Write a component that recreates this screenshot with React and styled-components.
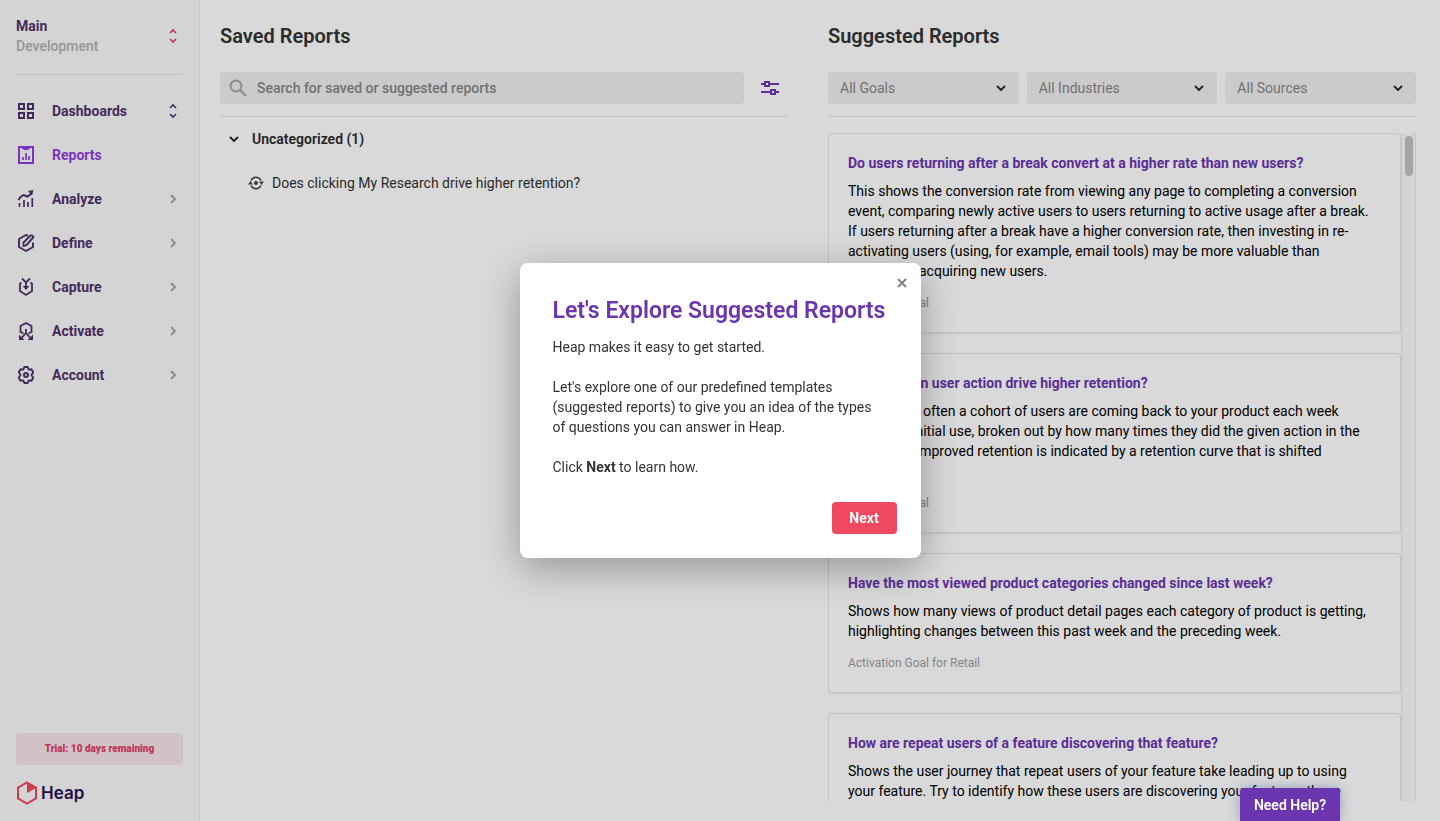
import React from 'react';
import styled, { createGlobalStyle } from 'styled-components';

const GlobalStyle = createGlobalStyle`
  *, *::before, *::after { box-sizing: border-box; }
  body { margin: 0; background: #ffffff; }
  body, button, input, select {
    font-family: Roboto, "Liberation Sans", sans-serif;
    font-size: 14px;
    line-height: 20px;
  }
  button { border: 0; padding: 0; background: none; cursor: pointer; text-align: left; }
  h1, h2, h3, p, ul { margin: 0; padding: 0; }
  ul { list-style: none; }
  a { text-decoration: none; color: inherit; }
  svg { display: block; flex: none; }
`;

const Page = styled.div`
  display: flex;
  height: 100vh;
  overflow: hidden;
  color: #333333;
`;

const Sidebar = styled.aside`
  display: flex;
  flex-direction: column;
  width: 200px;
  flex: none;
  padding: 16px;
  background: #fafafa;
  border-right: 1px solid #ebebeb;
  color: #50326a;
`;

const Environment = styled.button`
  display: flex;
  align-items: center;
  justify-content: space-between;
  padding: 0 4px 18px 0;
  border-bottom: 1px solid #e8e8e8;
  color: #50326a;
  font-weight: 700;
`;

const EnvironmentKind = styled.span`
  display: block;
  color: #b0b0b0;
  font-weight: 500;
`;

const Nav = styled.nav`
  margin-top: 14px;
  flex: 1;
`;

const NavLink = styled.a`
  display: flex;
  align-items: center;
  height: 44px;
  padding-right: 4px;
  font-weight: 700;
  color: ${(p) => (p.$active ? '#903ee0' : '#50326a')};
`;

const NavLabel = styled.span`
  flex: 1;
  margin-left: 16px;
`;

const Trial = styled.a`
  display: block;
  padding: 6px 0;
  border-radius: 4px;
  background: #f6e5e8;
  color: #e0406a;
  font-size: 10px;
  font-weight: 900;
  text-align: center;
`;

const Logo = styled.a`
  display: flex;
  align-items: center;
  gap: 3px;
  margin-top: 16px;
  color: #2b1150;
  font-family: Inter, sans-serif;
  font-size: 17px;
  font-weight: 600;
  line-height: 24px;
`;

const Main = styled.main`
  flex: 1;
  display: grid;
  grid-template-columns: repeat(2, minmax(0, 1fr));
  min-width: 0;
`;

const Column = styled.section`
  display: flex;
  flex-direction: column;
  min-height: 0;
  padding: ${(p) => p.$padding};
`;

const Heading = styled.h1`
  font-size: 20px;
  line-height: 24px;
  font-weight: 600;
`;

const Toolbar = styled.div`
  display: flex;
  gap: 8px;
  margin-top: 24px;
  padding-bottom: 12px;
  border-bottom: 1px solid #e8e8e8;
`;

const SearchBox = styled.label`
  flex: 1;
  display: flex;
  align-items: center;
  gap: 10px;
  height: 32px;
  padding: 0 9px;
  border-radius: 4px;
  background: #efefef;
`;

const SearchInput = styled.input`
  flex: 1;
  min-width: 0;
  border: 0;
  padding: 0;
  outline: 0;
  background: none;
  font-weight: 500;
  &::placeholder { color: #858585; opacity: 1; }
`;

const IconButton = styled.button`
  display: grid;
  place-items: center;
  width: 36px;
  height: 32px;
`;

const GroupToggle = styled.button`
  display: flex;
  align-items: center;
  gap: 10px;
  height: 40px;
  margin-top: 2px;
  padding-left: 6px;
  color: #2b2b2b;
  font-weight: 600;
`;

const SavedReport = styled.a`
  display: flex;
  align-items: center;
  gap: 8px;
  height: 40px;
  margin-top: 4px;
  padding-left: 28px;
`;

const SelectBox = styled.span`
  flex: 1;
  min-width: 0;
  display: grid;
  align-items: center;
  & > * { grid-area: 1 / 1; }
  & > svg { justify-self: end; margin-right: 10px; pointer-events: none; }
`;

const Select = styled.select`
  appearance: none;
  width: 100%;
  height: 32px;
  padding: 0 32px 0 12px;
  border: 0;
  border-radius: 4px;
  background: #efefef;
  color: #858585;
`;

const Suggestions = styled.div`
  display: flex;
  flex: 1;
  min-height: 0;
  margin-top: 16px;
`;

const CardList = styled.ul`
  flex: 1;
  min-width: 0;
  overflow: hidden;
`;

const Card = styled.li`
  margin-bottom: 20px;
  padding: 19px;
  border: 1px solid #e6e6e6;
  border-radius: 4px;
  box-shadow: 0 1px 3px rgba(0, 0, 0, 0.08);
`;

const CardTitle = styled.h2`
  font-size: 14px;
  line-height: 20px;
  font-weight: 700;
  color: #6c35b0;
`;

const CardText = styled.p`
  margin-top: 8px;
  color: #000000;
  white-space: pre-line;
`;

const CardMeta = styled.p`
  margin-top: 12px;
  font-size: 12px;
  line-height: 20px;
  color: #9c9c9c;
`;

const ScrollTrack = styled.div`
  width: 15px;
  flex: none;
  padding: 3px;
  border: solid #e8e8e8;
  border-width: 0 1px;
  background: #fafafa;
`;

const ScrollThumb = styled.div`
  width: 8px;
  height: 40px;
  border-radius: 4px;
  background: #c1c1c1;
`;

const Overlay = styled.div`
  position: fixed;
  inset: 0;
  display: grid;
  place-items: center;
  background: rgba(0, 0, 0, 0.15);
`;

const Dialog = styled.div`
  position: relative;
  width: 401px;
  padding: 34px 24px 24px 33px;
  border-radius: 8px;
  background: #ffffff;
  color: #333333;
  box-shadow: 0 10px 40px rgba(0, 0, 0, 0.32);
`;

const CloseButton = styled.button`
  position: absolute;
  top: 10px;
  right: 9px;
  display: grid;
  place-items: center;
  width: 20px;
  height: 20px;
`;

const DialogTitle = styled.h2`
  margin-bottom: 12px;
  font-size: 23px;
  line-height: 28px;
  font-weight: 600;
  color: #6c35b0;
  white-space: nowrap;
`;

const DialogText = styled.p`
  margin-bottom: ${(p) => (p.$last ? 25 : 20)}px;
  white-space: pre-line;
`;

const Actions = styled.div`
  display: flex;
  justify-content: flex-end;
`;

const PrimaryButton = styled.button`
  width: 65px;
  height: 32px;
  border-radius: 4px;
  background: #ef4860;
  color: #ffffff;
  font-weight: 700;
  text-align: center;
`;

const HelpButton = styled.button`
  position: fixed;
  right: 100px;
  bottom: 0;
  width: 100px;
  height: 33px;
  border-radius: 4px 4px 0 0;
  background: #6c35b0;
  color: #ffffff;
  font-weight: 600;
  text-align: center;
  box-shadow: 0 0 12px rgba(50, 90, 150, 0.45);
`;

const Icon = ({ size = 20, sw = 2, children, ...rest }) => (
  <svg
    width={size}
    height={size}
    viewBox={`0 0 ${size} ${size}`}
    fill="none"
    stroke="currentColor"
    strokeWidth={sw}
    aria-hidden="true"
    {...rest}
  >
    {children}
  </svg>
);

const UpDown = ({ color }) => (
  <Icon size={12} sw={1.6} height={16} viewBox="0 0 12 16" color={color}>
    <path d="m3 5 3-3 3 3M3 11l3 3 3-3" />
  </Icon>
);

const ChevronRight = () => (
  <Icon size={12} sw={1.8} color="#a3a3a3">
    <path d="m4 2 4 4-4 4" />
  </Icon>
);

const ChevronDown = () => (
  <Icon size={16} sw={1.8} color="#222222">
    <path d="m4 6 4 4 4-4" />
  </Icon>
);

const icons = {
  dashboards: (
    <path d="M3 3h5v5H3zM12 3h5v5h-5zM3 12h5v5H3zM12 12h5v5h-5z" />
  ),
  reports: (
    <>
      <path d="M3 2h14v16H3z" />
      <path d="M6 2h8v2h-1l-1 1H8L7 4H6z" fill="currentColor" stroke="none" />
      <path d="M7 12v3M10 8v7M13 11v4" strokeWidth="1.700" />
    </>
  ),
  analyze: (
    <>
      <path d="M3.500 14v4M8 11v7M12 13v5M16.300 9v9" strokeWidth="1.700" />
      <path d="m2.500 11 2-3 3-2 4 1.500L16 4" />
      <path d="m12 2 5.500-1L16 6.500z" fill="currentColor" stroke="none" />
    </>
  ),
  define: (
    <g strokeWidth="1.9">
      <path d="M12 2.500h-.500L10 2 3 6v8l7 4 7-4V9.500" />
      <path d="M7.500 13V9.500L14.500 2.500q2-.500 3 1.500l-7 8q-1.500 1-3 1z" strokeLinejoin="round" />
    </g>
  ),
  capture: (
    <g strokeWidth="1.8">
      <path d="M5.500 5.500 4 6.500v7.500l6 4 6-4V6.500l-1.500-1" />
      <path d="m6 1.500 4 4 4-4M10 5v5" />
      <path d="M6.500 9h7L10 13z" fill="currentColor" stroke="none" />
    </g>
  ),
  activate: (
    <g strokeWidth="1.8">
      <path d="M7.500 12.500 4.500 11V5L10 2l5.500 3v6l-3 1.500" />
      <path d="M10 8v4l-4.500 5M10 12l4.500 5" />
      <path d="M3 13.500V19h5.500zM17 13.500V19h-5.500z" fill="currentColor" stroke="none" />
    </g>
  ),
  account: (
    <>
      <path
        d="M8.300 2h3.400l1 2.600 2.800-.400 1.700 3-1.700 2.800 1.700 2.800-1.700 3-2.800-.400-1 2.600H8.300l-1-2.600-2.800.400-1.700-3L4.500 10 2.800 7.200l1.700-3 2.800.4z"
        strokeWidth="1.900"
        strokeLinejoin="round"
      />
      <circle cx="10" cy="10" r="2" />
    </>
  ),
};

const navItems = [
  { id: 'dashboards', label: 'Dashboards' },
  { id: 'reports', label: 'Reports', active: true },
  { id: 'analyze', label: 'Analyze' },
  { id: 'define', label: 'Define' },
  { id: 'capture', label: 'Capture' },
  { id: 'activate', label: 'Activate' },
  { id: 'account', label: 'Account' },
];

const NavEnd = ({ id }) => {
  if (id === 'dashboards') return <UpDown color="#50326a" />;
  if (id === 'reports') return null;
  return <ChevronRight />;
};

const filters = ['All Goals', 'All Industries', 'All Sources'];

const suggestions = [
  {
    title: 'Do users returning after a break convert at a higher rate than new users?',
    text: 'This shows the conversion rate from viewing any page to completing a conversion\nevent, comparing newly active users to users returning to active usage after a break.\nIf users returning after a break have a higher conversion rate, then investing in re-\nactivating users (using, for example, email tools) may be more valuable than\nproactively acquiring new users.',
    meta: 'Activation Goal',
  },
  {
    title: 'Does a given user action drive higher retention?',
    text: 'Shows how often a cohort of users are coming back to your product each week\nafter their initial use, broken out by how many times they did the given action in the\nfirst week. Improved retention is indicated by a retention curve that is shifted\nupward.',
    meta: 'Activation Goal',
  },
  {
    title: 'Have the most viewed product categories changed since last week?',
    text: 'Shows how many views of product detail pages each category of product is getting,\nhighlighting changes between this past week and the preceding week.',
    meta: 'Activation Goal for Retail',
  },
  {
    title: 'How are repeat users of a feature discovering that feature?',
    text: 'Shows the user journey that repeat users of your feature take leading up to using\nyour feature. Try to identify how these users are discovering your feature - these',
    meta: 'Activation Goal',
  },
];

export default function App() {
  return (
    <>
      <GlobalStyle />
      <Page>
        <Sidebar>
          <Environment>
            <span>
              Main
              <EnvironmentKind>Development</EnvironmentKind>
            </span>
            <UpDown color="#e0405a" />
          </Environment>
          <Nav>
            {navItems.map((item) => (
              <NavLink key={item.id} href={`#${item.id}`} $active={item.active}>
                <Icon>{icons[item.id]}</Icon>
                <NavLabel>{item.label}</NavLabel>
                <NavEnd id={item.id} />
              </NavLink>
            ))}
          </Nav>
          <Trial href="#trial">Trial: 10 days remaining</Trial>
          <Logo href="#home">
            <Icon size={22} sw={2} height={24} viewBox="0 0 22 24" color="#ee4860">
              <path d="m11 1.500 9 5.200v10.600l-9 5.200-9-5.200V6.700z" />
              <path d="M11 2v10l9-5z" fill="currentColor" stroke="none" />
            </Icon>
            Heap
          </Logo>
        </Sidebar>

        <Main>
          <Column $padding="24px 32px 20px 20px">
            <Heading>Saved Reports</Heading>
            <Toolbar>
              <SearchBox>
                <Icon size={18} color="#a3a3a3">
                  <circle cx="7" cy="7" r="5.500" />
                  <path d="m11 11 6 6" />
                </Icon>
                <SearchInput aria-label="Search reports" placeholder="Search for saved or suggested reports" />
              </SearchBox>
              <IconButton aria-label="Filter reports">
                <Icon size={18} color="#6c35b0">
                  <path d="M0 5h4M8 5h10M0 13h10M14 13h4" />
                  <rect x="4" y="3" width="4" height="4" />
                  <rect x="10" y="11" width="4" height="4" />
                </Icon>
              </IconButton>
            </Toolbar>
            <GroupToggle>
              <ChevronDown />
              Uncategorized (1)
            </GroupToggle>
            <SavedReport href="#report">
              <Icon size={16} sw={1} color="#444444">
                <path d="M3 5.500a5.500 5.500 0 0 1 10 0M13 10.500a5.500 5.500 0 0 1-10 0" strokeWidth="1.500" />
                <path d="M0 9.500 2.500 6 5 9.500zM11 6.500h5L13.500 10z" fill="currentColor" stroke="none" />
                <circle cx="8" cy="8" r="2" fill="currentColor" stroke="none" />
              </Icon>
              Does clicking My Research drive higher retention?
            </SavedReport>
          </Column>

          <Column $padding="24px 24px 20px 8px">
            <Heading as="h2">Suggested Reports</Heading>
            <Toolbar>
              {filters.map((name) => (
                <SelectBox key={name}>
                  <Select aria-label={name}>
                    <option>{name}</option>
                  </Select>
                  <ChevronDown />
                </SelectBox>
              ))}
            </Toolbar>
            <Suggestions>
              <CardList>
                {suggestions.map((s) => (
                  <Card key={s.title}>
                    <CardTitle>{s.title}</CardTitle>
                    <CardText>{s.text}</CardText>
                    <CardMeta>{s.meta}</CardMeta>
                  </Card>
                ))}
              </CardList>
              <ScrollTrack>
                <ScrollThumb />
              </ScrollTrack>
            </Suggestions>
          </Column>
        </Main>
      </Page>

      <Overlay>
        <Dialog role="dialog" aria-labelledby="tour-title">
          <CloseButton aria-label="Close">
            <Icon size={10} color="#808080">
              <path d="m1 1 8 8M9 1 1 9" />
            </Icon>
          </CloseButton>
          <DialogTitle id="tour-title">Let's Explore Suggested Reports</DialogTitle>
          <DialogText>Heap makes it easy to get started.</DialogText>
          <DialogText>
            {"Let's explore one of our predefined templates\n(suggested reports) to give you an idea of the types\nof questions you can answer in Heap."}
          </DialogText>
          <DialogText $last>
            Click <b>Next</b> to learn how.
          </DialogText>
          <Actions>
            <PrimaryButton>Next</PrimaryButton>
          </Actions>
        </Dialog>
      </Overlay>
      <HelpButton>Need Help?</HelpButton>
    </>
  );
}
